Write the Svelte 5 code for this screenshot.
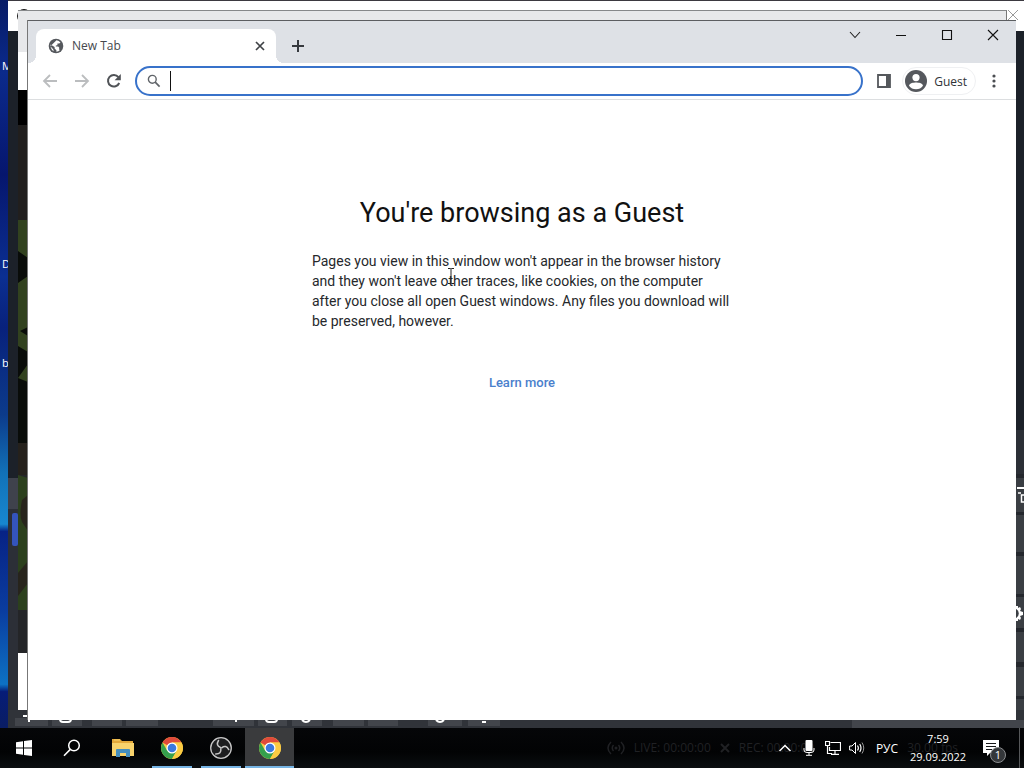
<script>
  let address = $state('');
  const shortcuts = [
    { name: 'M', cls: 'first' },
    { name: 'D', cls: 'second' },
    { name: 'b', cls: 'third' }
  ];
</script>

{#snippet chrome()}
  <svg width="24" height="24" viewBox="0 0 24 24" aria-hidden="true">
    <circle cx="12" cy="12" r="11" fill="#f8cb45" />
    <path d="M12 12 L2.5 6.5 A11 11 0 0 1 21.5 6.5 L12 6.5Z" fill="#df4a3b" />
    <path d="M2.5 6.5 A11 11 0 0 0 12 23 L16.7 14.8 L12 12 L7.2 14.7Z" fill="#35a04d" />
    <path d="M12 6.5 H21.5 A11 11 0 0 1 12 23 L16.8 14.7Z" fill="#fbcb43" />
    <circle cx="12" cy="12" r="5.5" fill="#fff" />
    <circle cx="12" cy="12" r="4.3" fill="#3b78e0" />
  </svg>
{/snippet}

<div class="desktop">
  <div class="stage">
    {#each shortcuts as s}
      <span class="shortcut {s.cls}">{s.name}</span>
    {/each}

    <div class="studio">
      <div class="studio-title">
        <svg class="studio-logo" width="14" height="14" viewBox="0 0 14 14" aria-hidden="true"><circle cx="7" cy="7" r="7" fill="#111" /></svg>
        <svg width="12" height="12" viewBox="0 0 12 12" aria-hidden="true"><path d="M1 1 L11 11 M11 1 L1 11" stroke="#999" fill="none" /></svg>
      </div>
      <svg class="studio-left" width="10" height="250" viewBox="0 0 10 250" aria-hidden="true">
        <path d="M0 0H10V31H0Z" fill="#3f424c" />
        <path d="M0 31H10V250H0Z" fill="#2c2f37" />
        <rect x="4" y="35" width="6" height="33" rx="2" fill="#3454bd" />
      </svg>
      <svg class="studio-right" width="8" height="298" viewBox="0 0 8 298" aria-hidden="true">
        <path d="M0 0H8V298H0Z" fill="#24272d" />
        <path d="M0 0H8V44H0Z" fill="#2b2f36" />
        <path d="M0 48H8V82H0Z M0 85H8V122H0Z M0 126H8V164H0Z M0 167H8V198H0Z M0 202H8V232H0Z M0 237H8V266H0Z M0 269H8V290H0Z" fill="#3a3e43" />
        <path d="M1 58H8" stroke="#fff" stroke-width="2" fill="none" />
        <path d="M2 63H5M8 65H5.500V72H8" stroke="#fff" stroke-width="1.500" fill="none" />
        <path d="M0 176H2V178L4 177L5 179L4 181L7 182V185L4 186L5 188L4 190L2 189V191H0V188A5 5 0 0 0 0 179Z" fill="#fff" />
      </svg>
      <svg class="studio-bottom" width="1016" height="18" viewBox="0 0 1016 18" aria-hidden="true">
        <path d="M0 0H1016V18H0Z" fill="#303339" />
        <path d="M7 8H40V16H7Z M44 8H74V16H44Z M84 8H114V16H84Z M118 8H150V16H118Z M205 8H246V16H205Z M250 8H279V16H250Z M284 8H314V16H284Z M325 8H356V16H325Z M360 8H390V16H360Z M420 8H454V16H420Z M460 8H492V16H460Z M844 10H1016V18H844Z" fill="#42454b" />
        <path d="M15 6H20 M21 9V12 M228 9V12 M474 12H478" stroke="#fff" stroke-width="2" fill="none" />
        <path d="M52 9Q52 12 55 12H60Q63 12 63 9 M258 9Q258 12 261 12H266Q269 12 269 9 M294 10Q298 14 302 10 M428 10Q432 14 436 10" stroke="#fff" stroke-width="2" fill="none" />
      </svg>
    </div>

    <div class="backwin">
      <div class="back-tabs"></div>
      <div class="back-bar"></div>
      <svg class="back-page" viewBox="0 0 10 620" preserveAspectRatio="none" aria-hidden="true">
        <path d="M0 0H10V620H0Z" fill="#242528" />
        <path d="M0 0H10V35H0Z" fill="#000" />
        <path d="M0 35H10V130H0Z" fill="#211f1e" />
        <path d="M0 130H10V353H0Z" fill="#32421f" />
        <path d="M0 161L10 168V186L0 193Z M10 237L2 241L10 246Z M0 256L10 262V274L0 288Z M0 288L10 292V353H0Z" fill="#090c09" />
        <path d="M0 353H10V385H0Z" fill="#25211c" />
        <path d="M0 385L10 388V520H0Z" fill="#2c401d" />
        <path d="M10 405L4 410Q1 425 4 432L10 441Z M0 483L10 471V493L0 506Z" fill="#27241c" />
        <path d="M0 563H10V620H0Z" fill="#fff" />
      </svg>
    </div>

    <main class="browser">
      <header class="tabstrip">
        <div class="tab">
          <svg width="16" height="16" viewBox="0 0 16 16" aria-hidden="true">
            <circle cx="8" cy="8" r="7.300" fill="#55585d" />
            <path d="M8.500 2.300Q11 2.500 12.500 4.400L11.200 5.600H9.400V7.200L7.800 7.600V8.600H10.200L11.300 9.800L11 11.600L12 12Q10.500 13.500 8.400 13.700V12.200L6.600 10.600V9L2.500 6.600Q1.900 9.700 4 12L5.800 13.300L5.200 11.300L2.300 8.200Z" fill="#fff" />
          </svg>
          <span>New Tab</span>
          <button class="tab-close" aria-label="Close tab"><svg width="10" height="10" viewBox="0 0 10 10"><path d="M1 1L9 9M9 1L1 9" stroke="#3f4246" stroke-width="1.7" fill="none" /></svg></button>
        </div>
        <button class="newtab" aria-label="New tab"><svg width="14" height="14" viewBox="0 0 14 14"><path d="M7 1V13M1 7H13" stroke="#36393e" stroke-width="2" fill="none" /></svg></button>
        <div class="controls">
          <button aria-label="Search tabs"><svg width="12" height="12" viewBox="0 0 12 12"><path d="M1 3L6 8.5L11 3" stroke="#222" stroke-width="1.1" fill="none" /></svg></button>
          <button aria-label="Minimize"><svg width="12" height="12" viewBox="0 0 12 12"><path d="M1 6.5H11" stroke="#111" fill="none" /></svg></button>
          <button aria-label="Maximize"><svg width="12" height="12" viewBox="0 0 12 12"><path d="M1.5 1.5H10.5V10.5H1.5Z" stroke="#111" stroke-width="1.1" fill="none" /></svg></button>
          <button aria-label="Close"><svg width="12" height="12" viewBox="0 0 12 12"><path d="M1 1L11 11M11 1L1 11" stroke="#111" stroke-width="1.1" fill="none" /></svg></button>
        </div>
      </header>

      <nav class="toolbar">
        <button aria-label="Back"><svg width="16" height="16" viewBox="0 0 16 16"><path d="M15 8H2M8 2L2 8L8 14" stroke="#bbbdbf" stroke-width="1.8" fill="none" /></svg></button>
        <button aria-label="Forward"><svg width="16" height="16" viewBox="0 0 16 16"><path d="M1 8H14M8 2L14 8L8 14" stroke="#bbbdbf" stroke-width="1.8" fill="none" /></svg></button>
        <button aria-label="Reload"><svg width="16" height="16" viewBox="0 0 16 16"><path d="M13.2 10A5.8 5.8 0 1 1 12.4 4.2" stroke="#505357" stroke-width="2" fill="none" /><path d="M14.8 1V7.2H8.6Z" fill="#505357" /></svg></button>
        <label class="omnibox">
          <svg width="14" height="14" viewBox="0 0 14 14" aria-hidden="true"><circle cx="5.3" cy="5.3" r="3.9" stroke="#5f6368" stroke-width="1.4" fill="none" /><path d="M8.2 8.2L12.6 12.6" stroke="#5f6368" stroke-width="1.7" /></svg>
          <span class="caret"></span>
          <input type="text" aria-label="Address and search bar" bind:value={address} />
        </label>
        <button aria-label="Side panel"><svg width="14" height="14" viewBox="0 0 14 14"><path d="M1 1H13V13H1Z" stroke="#55585c" stroke-width="1.8" fill="none" /><path d="M9 1H13V13H9Z" fill="#55585c" /></svg></button>
        <button class="profile">
          <svg width="22" height="22" viewBox="0 0 22 22" aria-hidden="true"><circle cx="11" cy="11" r="11" fill="#55585d" /><circle cx="11" cy="7.6" r="3.6" fill="#fff" /><path d="M4 15.7C4.6 13.2 8.6 12.6 11 12.6S17.4 13.2 18 15.7Q15.500 19.200 11 19.200T4 15.700Z" fill="#fff" /></svg>
          <span>Guest</span>
        </button>
        <button aria-label="Menu"><svg width="4" height="14" viewBox="0 0 4 14"><g fill="#4b4e52"><circle cx="2" cy="2" r="1.6" /><circle cx="2" cy="7" r="1.6" /><circle cx="2" cy="12" r="1.6" /></g></svg></button>
      </nav>

      <section class="page">
        <h1>You're browsing as a Guest</h1>
        <p>Pages you view in this window won't appear in the browser history and they won't leave other traces, like cookies, on the computer after you close all open Guest windows. Any files you download will be preserved, however.</p>
        <a href="#learn">Learn more</a>
        <svg class="pointer" width="8" height="16" viewBox="0 0 8 16" aria-hidden="true"><path d="M1 .5H3.500L4 1L4.500 .5H7M4 1V15M1 15.500H3.500L4 15L4.500 15.500H7" stroke="#222" fill="none" /></svg>
      </section>
    </main>
  </div>

  <footer class="taskbar">
    <div class="ghost" aria-hidden="true">
      <svg width="18" height="14" viewBox="0 0 18 14"><path d="M4 1Q-2 7 4 13M14 1Q20 7 14 13M6.500 4Q4 7 6.500 10M11.500 4Q14 7 11.500 10" stroke="#202124" stroke-width="1.500" fill="none" /><circle cx="9" cy="7" r="1.500" fill="#202124" /></svg>
      <span>LIVE: 00:00:00</span>
      <svg width="10" height="10" viewBox="0 0 10 10"><path d="M1 1L9 9M9 1L1 9" stroke="#202124" stroke-width="2" /></svg>
      <span>REC: 00:00:00</span>
      <span class="fps">30.00 fps</span>
    </div>
    <button class="sys" aria-label="Start"><svg width="16" height="16" viewBox="0 0 16 16"><path d="M0 2.300L7 1.300V7.500H0ZM8 1.100L16 0V7.500H8ZM0 8.500H7V14.700L0 13.700ZM8 8.500H16V16L8 14.900Z" fill="#fff" /></svg></button>
    <button class="sys" aria-label="Search"><svg width="18" height="18" viewBox="0 0 18 18"><circle cx="11" cy="6.500" r="5.300" stroke="#fff" stroke-width="1.500" fill="none" /><path d="M7.300 10.400L1 16.700" stroke="#fff" stroke-width="1.600" /></svg></button>
    <div class="apps">
      <button aria-label="File Explorer"><svg width="22" height="20" viewBox="0 0 22 20"><path d="M0 1H8L10 3H21V18H0Z" fill="#e3a93a" /><path d="M0 5H22V18H0Z" fill="#f8d36c" /><path d="M4 19V12Q4 11 5 11H17Q18 11 18 12V19H14V15H8V19Z" fill="#458ebd" /><path d="M2 2H8" stroke="#f8d36c" /></svg></button>
      <button class="running" aria-label="Google Chrome">{@render chrome()}</button>
      <button class="running" aria-label="OBS Studio"><svg width="24" height="24" viewBox="0 0 24 24"><circle cx="12" cy="12" r="10.300" fill="#1d1e20" stroke="#c7c7c7" stroke-width="1.300" /><g stroke="#c7c7c7" stroke-width="1.500" fill="none" stroke-linecap="round"><path d="M9.500 4.500Q6.500 9.500 11.500 11.500" /><path d="M9.500 4.500Q6.500 9.500 11.500 11.500" transform="rotate(120 12 12)" /><path d="M9.500 4.500Q6.500 9.500 11.500 11.500" transform="rotate(240 12 12)" /></g></svg></button>
      <button class="running active" aria-label="Google Chrome, Guest">{@render chrome()}</button>
    </div>
    <div class="tray">
      <button aria-label="Show hidden icons"><svg width="14" height="10" viewBox="0 0 14 10"><path d="M1.500 8L7 2.500L12.500 8" stroke="#fff" stroke-width="1.500" fill="none" /></svg></button>
      <button aria-label="Microphone"><svg width="12" height="16" viewBox="0 0 12 16"><rect x="2.500" y="0" width="7" height="11" rx="1" fill="#fff" /><path d="M1 8V10Q1 12.500 4 12.500H8Q11 12.500 11 10V8M6 12.500V15M3 15.300H9" stroke="#fff" fill="none" /></svg></button>
      <button aria-label="Network"><svg width="16" height="14" viewBox="0 0 16 14"><path d="M5.500 1.500H15.500V9.500H4.500V6M10 9.500V13M6 13.300H14M.5 .5H4.500V4.500H.5ZM2.500 4.500V12.500H7" stroke="#fff" stroke-width="1.200" fill="none" /></svg></button>
      <button aria-label="Volume"><svg width="17" height="14" viewBox="0 0 17 14"><path d="M.6 5H3L6.500 1.500V12.500L3 9H.6Z" stroke="#fff" fill="none" /><path d="M8.500 4.500Q10.300 7 8.500 9.500M10.700 3Q13.300 7 10.700 11" stroke="#fff" stroke-width="1.200" fill="none" /><path d="M13 1.500Q16.500 7 13 12.500" stroke="#999" fill="none" /></svg></button>
      <button class="lang">РУС</button>
      <button class="clock"><span>7:59</span><span>29.09.2022</span></button>
      <button class="notes" aria-label="Notifications">
        <svg width="16" height="16" viewBox="0 0 16 16"><path d="M0 0H16V13H7L4 16V13H0Z" fill="#fff" /><path d="M3 3.500H13M3 6.500H13M3 9.500H9" stroke="#17181a" fill="none" /></svg>
        <span class="badge">1</span>
      </button>
      <span class="peek"></span>
    </div>
  </footer>
</div>

<style>
  :global(body) { margin: 0; }
  * { box-sizing: border-box; }
  .desktop { min-height: 100vh; display: flex; flex-direction: column; overflow: hidden; font-family: "Open Sans", "Noto Sans", sans-serif; }
  button { display: flex; align-items: center; justify-content: center; border: 0; padding: 0; background: none; color: inherit; font: inherit; flex: none; }
  svg { display: block; flex: none; }

  .stage { position: relative; flex: 1; background: linear-gradient(#071b66 0, #0b2a8c 10%, #06166e 24%, #0b2f91 38%, #08217c 45%, #0c3b8b 57%, #1272b8 65%, #1787d0 72%, #072285 73%, #0a3da0 84%, #0d72c4 94%, #061c78 95%, #0a1d63 100%); }
  .shortcut { position: absolute; left: 2px; color: #fff; font-size: 11px; line-height: 16px; }
  .first { top: 58px; }
  .second { top: 256px; }
  .third { top: 355px; }

  .studio { position: absolute; inset: 0 0 0 8px; background: #1c2129; border-top: 1px solid #3b3940; overflow: hidden; }
  .studio-title { height: 30px; padding: 8px 5px 0 9px; background: #fff; display: flex; justify-content: space-between; }
  .studio-left { position: absolute; left: 0; bottom: 0; }
  .studio-right { position: absolute; right: 0; bottom: 0; }
  .studio-bottom { position: absolute; left: 0; bottom: 0; }

  .backwin { position: absolute; inset: 10px 17px 18px 18px; display: flex; flex-direction: column; background: #fff; border-top: 1px solid #86888a; border-right: 1px solid #777; overflow: hidden; }
  .back-tabs { height: 41px; flex: none; background: #e7e8ea; }
  .back-bar { height: 38px; flex: none; }
  .back-page { width: 10px; height: 100%; flex: 1 1 0; min-height: 0; }

  .browser { position: absolute; inset: 20px 8px 8px 28px; display: flex; flex-direction: column; background: #fff; border-top: 1px solid #5c5e61; box-shadow: -1px 0 #777; }
  .tabstrip { display: flex; align-items: flex-start; height: 42px; padding-left: 8px; background: #dee1e6; }
  .tab { position: relative; display: flex; align-items: center; gap: 8px; width: 240px; height: 34px; margin-top: 8px; padding: 0 8px 0 12px; background: #fff; border-radius: 8px 8px 0 0; font-size: 12px; line-height: 18px; color: #45484d; }
  .tab::before, .tab::after { content: ""; position: absolute; bottom: 0; width: 8px; height: 8px; }
  .tab::before { left: -8px; background: radial-gradient(circle at 0 0, #dee1e6 8px, #fff 8px); }
  .tab::after { right: -8px; background: radial-gradient(circle at 100% 0, #dee1e6 8px, #fff 8px); }
  .tab-close { width: 16px; height: 16px; margin-left: auto; }
  .newtab { width: 28px; height: 28px; margin: 11px 0 0 8px; }
  .controls { display: flex; margin-left: auto; }
  .controls button { width: 46px; height: 28px; }

  .toolbar { display: flex; align-items: center; height: 37px; padding: 0 6px; border-bottom: 1px solid #dcdee0; }
  .toolbar > button { width: 32px; height: 30px; }
  .omnibox { flex: 1; min-width: 0; height: 30px; margin: 0 5px; padding: 0 11px 0 10px; display: flex; align-items: center; border: 2px solid #3872ca; border-radius: 15px; }
  .caret { width: 1px; height: 20px; margin-left: 9px; background: #111; }
  .omnibox input { flex: 1; min-width: 0; border: 0; padding: 0; outline: 0; background: none; font: 14px "Open Sans", sans-serif; }
  .toolbar > .profile { width: auto; height: 28px; margin: 0 2px; padding: 0 8px 0 2px; gap: 7px; border: 1px solid #eff0f2; border-radius: 14px; font-size: 12px; color: #303337; }

  .page { position: relative; flex: 1; display: flex; flex-direction: column; align-items: center; padding: 96px 24px 0; font-family: Roboto, sans-serif; }
  h1 { margin: 0; font-size: 27px; line-height: 34px; font-weight: 400; color: #111; }
  p { width: 420px; max-width: 100%; margin: 21px 0 0; font-size: 14px; line-height: 20px; color: #26282b; }
  a { margin-top: 42px; font-size: 13px; line-height: 20px; font-weight: 500; color: #4a80cc; text-decoration: none; }
  .pointer { position: absolute; left: 419px; top: 168px; }

  .taskbar { position: relative; display: flex; height: 40px; background: linear-gradient(#050608, #020304 60%, #0b0e10); color: #fff; }
  .ghost { position: absolute; right: 66px; top: 12px; display: flex; align-items: center; gap: 9px; color: #202124; font-size: 12px; line-height: 16px; white-space: nowrap; }
  .fps { margin-left: 84px; }
  .sys { width: 48px; }
  .apps { display: flex; margin-left: 2px; }
  .apps button { position: relative; width: 49px; }
  .running::after { content: ""; position: absolute; left: 5px; right: 4px; bottom: 0; height: 2px; background: #76b4e4; }
  .apps .active { background: #3a3b3d; }
  .active::after { left: 0; right: 0; }
  .tray { position: relative; display: flex; margin-left: auto; font-size: 12px; }
  .tray button { width: 24px; }
  .tray .lang { width: 36px; }
  .tray .clock { width: 66px; flex-direction: column; font-size: 11px; line-height: 18px; }
  .tray .notes { position: relative; width: 48px; padding-right: 8px; }
  .badge { position: absolute; left: 19px; top: 19px; width: 16px; height: 16px; border: 1px solid #8b8d8f; border-radius: 50%; background: #34373a; font-size: 11px; line-height: 14px; text-align: center; }
  .peek { width: 5px; border-left: 1px solid #56585a; }
</style>
